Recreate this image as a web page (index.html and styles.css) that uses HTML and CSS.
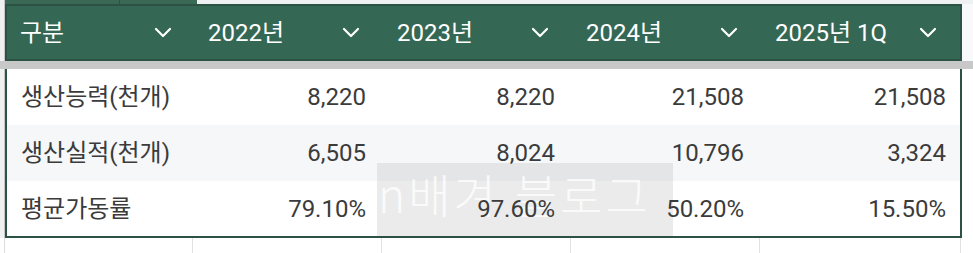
FILE: index.html
```html
<!DOCTYPE html>
<html lang="ko">
<head>
<meta charset="utf-8">
<title>생산능력 표</title>
<link rel="stylesheet" href="styles.css">
</head>
<body>
<div class="sheet">
  <div class="strip">
    <div class="gut"></div>
    <div class="strip-green"><span class="sg1"></span><span class="sg2"></span></div>
    <div class="strip-rest"></div>
  </div>

  <div class="head-band">
    <div class="gut"></div>
    <div class="thead">
      <div class="th"><span>구분</span><svg class="chev" viewBox="0 0 18 11" width="18" height="11"><polyline points="2,2 9,9 16,2"/></svg></div>
      <div class="th"><span>2022년</span><svg class="chev" viewBox="0 0 18 11" width="18" height="11"><polyline points="2,2 9,9 16,2"/></svg></div>
      <div class="th"><span>2023년</span><svg class="chev" viewBox="0 0 18 11" width="18" height="11"><polyline points="2,2 9,9 16,2"/></svg></div>
      <div class="th"><span>2024년</span><svg class="chev" viewBox="0 0 18 11" width="18" height="11"><polyline points="2,2 9,9 16,2"/></svg></div>
      <div class="th"><span>2025년 1Q</span><svg class="chev" viewBox="0 0 18 11" width="18" height="11"><polyline points="2,2 9,9 16,2"/></svg></div>
    </div>
    <div class="side"></div>
  </div>

  <div class="freeze"></div>

  <div class="body-band">
    <div class="gut"></div>
    <div class="tbody">
      <div class="tr">
        <div class="td label">생산능력(천개)</div>
        <div class="td num">8,220</div>
        <div class="td num">8,220</div>
        <div class="td num">21,508</div>
        <div class="td num">21,508</div>
      </div>
      <div class="tr alt">
        <div class="td label">생산실적(천개)</div>
        <div class="td num">6,505</div>
        <div class="td num">8,024</div>
        <div class="td num">10,796</div>
        <div class="td num">3,324</div>
      </div>
      <div class="tr last">
        <div class="td label">평균가동률</div>
        <div class="td num">79.10%</div>
        <div class="td num">97.60%</div>
        <div class="td num">50.20%</div>
        <div class="td num">15.50%</div>
      </div>
    </div>
    <div class="side"></div>
  </div>

  <div class="below">
    <div class="gut"></div>
    <div class="bc bc-a"></div>
    <div class="bc"></div>
    <div class="bc"></div>
    <div class="bc"></div>
    <div class="bc bc-e"></div>
    <div class="bc bc-end"></div>
  </div>

  <div class="watermark">n배겨 블로그</div>
</div>
</body>
</html>
```
FILE: styles.css
```css
* { box-sizing: border-box; }
html, body { margin: 0; padding: 0; background: #ffffff; }
body { width: 973px; height: 253px; overflow: hidden; }

.sheet {
  position: relative;
  width: 973px;
  height: 253px;
  font-family: "Roboto", "Noto Sans CJK KR", sans-serif;
  font-size: 24px;
  color: #3b3b3b;
}

.gut {
  width: 5px;
  flex: 0 0 5px;
  background: #eef0f1;
  border-right: 1px solid #c4c7c5;
}

/* top strip (previous row) */
.strip { display: flex; height: 4px; }
.strip-green { display: flex; width: 192px; }
.sg1 { width: 115px; background: #3a6a56; border-right: 1px solid #2b5243; }
.sg2 { flex: 1; background: #3a6a56; }
.strip-rest { flex: 1; background: #eef0f1; }

/* header */
.head-band { display: flex; height: 57px; }
.thead {
  display: grid;
  grid-template-columns: 186px 189px 189px 189px 1fr;
  width: 957px;
  background: #356854;
  border: 2px solid #2b5243;
  color: #ffffff;
}
.th {
  display: flex;
  align-items: center;
  justify-content: space-between;
  padding: 0 22px 0 15px;
  line-height: 1;
}
.th:first-child { padding-left: 13px; padding-right: 21px; }
.th:last-child { padding-right: 23px; }
.chev { fill: none; stroke: #ffffff; stroke-width: 2.2; stroke-linecap: round; stroke-linejoin: round; }
.side { flex: 1; background: #f8f9fa; }

.freeze { height: 8px; background: #c8c8c8; }

/* body */
.body-band { display: flex; height: 169px; }
.body-band .side { background: #ffffff; }
.tbody {
  width: 957px;
  border: 2px solid #2b5243;
  border-top: 0;
}
.tr {
  display: grid;
  grid-template-columns: 186px 189px 189px 189px 1fr;
  height: 56px;
  align-items: center;
  background: #ffffff;
}
.tr.alt { background: #f5f7f8; }
.tr.last { height: 55px; }
.td { position: relative; z-index: 2; padding: 0 16px; line-height: 1; }
.td.label { padding-left: 14px; }
.td.num { text-align: right; }
.tr .td.num:last-child { padding-right: 14px; }

/* grid below */
.below { display: flex; height: 15px; }
.below .gut { background: #ffffff; border-right: 1px solid #dadce0; }
.bc { width: 189px; border-right: 1px solid #e1e1e1; }
.bc-a { width: 188px; }
.bc-e { width: 201px; }
.bc-end { flex: 1; border-right: 0; }

/* watermark overlay (sits above row backgrounds, under cell text) */
.watermark {
  position: absolute;
  z-index: 1;
  left: 377px;
  top: 163px;
  width: 296px;
  height: 73px;
  background: rgba(190, 190, 190, 0.3);
  color: rgba(255, 255, 255, 0.8);
  font-family: "Noto Sans CJK KR", sans-serif;
  font-weight: 300;
  font-size: 46px;
  line-height: 1;
  padding: 7px 0 0 1px;
  white-space: nowrap;
  letter-spacing: 3px;
}
```
